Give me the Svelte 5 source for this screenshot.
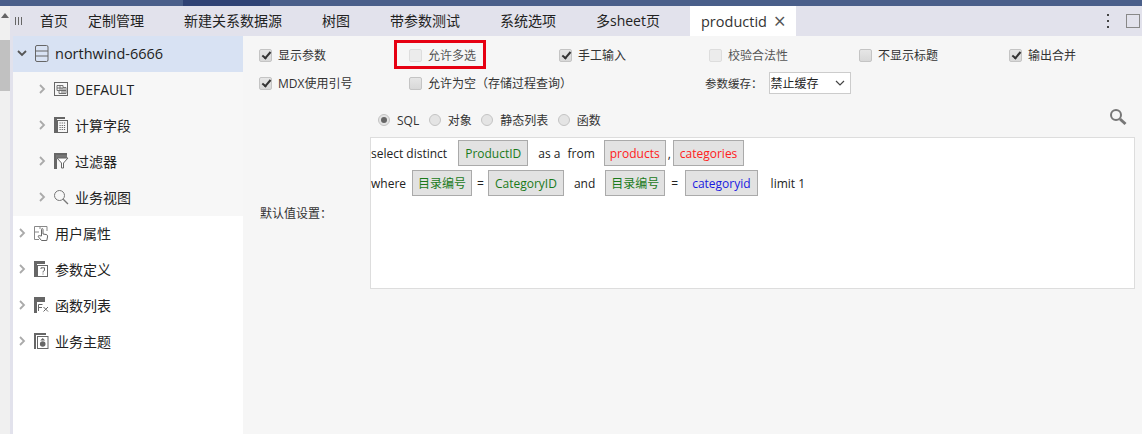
<script>
	const tabs = ['首页', '定制管理', '新建关系数据源', '树图', '带参数测试', '系统选项', '多sheet页']

	const row1 = [
		{ label: '显示参数', checked: true },
		{ label: '允许多选', disabled: true, flagged: true },
		{ label: '手工输入', checked: true },
		{ label: '校验合法性', disabled: true },
		{ label: '不显示标题' },
		{ label: '输出合并', checked: true }
	]

	const radios = [
		{ label: 'SQL', checked: true },
		{ label: '对象' },
		{ label: '静态列表' },
		{ label: '函数' }
	]

	const children = [
		{ label: 'DEFAULT', icon: 'grid' },
		{ label: '计算字段', icon: 'calc' },
		{ label: '过滤器', icon: 'filter' },
		{ label: '业务视图', icon: 'lens' }
	]

	const roots = [
		{ label: '用户属性', icon: 'hand' },
		{ label: '参数定义', icon: 'param' },
		{ label: '函数列表', icon: 'fx' },
		{ label: '业务主题', icon: 'topic' }
	]
</script>

{#snippet chevron(open)}
	<svg class="chev" width="10" height="12" viewBox="0 0 10 12">
		{#if open}
			<path d="M1 4l4 4 4-4" fill="none" stroke="#555" stroke-width="1.8" />
		{:else}
			<path d="M3 2l4 4-4 4" fill="none" stroke="#aaa" stroke-width="1.8" />
		{/if}
	</svg>
{/snippet}

{#snippet treeIcon(name)}
	<svg class="icon" width="16" height="16" viewBox="0 0 16 16" fill="none" stroke="#666" stroke-width="1">
		{#if name === 'grid'}
			<rect x="1.5" y="1.5" width="13" height="13" />
			<path d="M4 4.5h6v2h3v6H6v-3H4zM7 4.5v5M4 7h6M6 9.5h7M9 7v5.5M11 7v5.5" stroke-width="0.9" />
		{:else if name === 'calc'}
			<path d="M1 0h11v2H4v14H1z" fill="#666" stroke="none" />
			<rect x="4.5" y="3.5" width="10" height="12" />
			<path d="M6.5 6h6M6.5 8.5h6M6.5 10.5h6M6.5 12.5h6" stroke-dasharray="1.2 1" />
		{:else if name === 'filter'}
			<path d="M1 0h13v2H4v14H1z" fill="#666" stroke="none" />
			<path d="M3 2h11v4H3z" fill="#777" stroke="none" />
			<path d="M4 5h11l-4.500 5v5H8.500v-5z" fill="#fff" stroke="#666" />
		{:else if name === 'lens'}
			<circle cx="6.5" cy="6.5" r="5" stroke="#777" />
			<path d="M10.2 10.2l4.800 4.800" stroke="#777" stroke-width="1.3" />
		{:else if name === 'hand'}
			<path d="M14 6V1.500H1.500v13H6" stroke="#888" />
			<path d="M1.500 7H6M7 1.500V4" stroke="#888" />
			<path d="M8.500 11V4.500c0-1.300 1.500-1.300 1.500 0V9l3 .5c1.500.3 1.800 1 1.500 2.500l-.7 3.500H8.500L5.500 12c-.8-1 .4-2 1.300-1.200z" fill="#fff" />
		{:else if name === 'param'}
			<path d="M1 0h11v3H4v13H1z" fill="#666" stroke="none" />
			<rect x="4.5" y="4.5" width="10" height="11" />
			<path d="M8 8V6.800h3.500V9.500L10 10.500v1" />
			<path d="M10 12.500v1" />
		{:else if name === 'fx'}
			<path d="M1 0h11v5H4v11H1z" fill="#666" stroke="none" />
			<path d="M5.500 14V7.500h4M5.500 10.500h3.500M10.500 10l4.500 4.500M15 10l-4.500 4.500" />
		{:else}
			<path d="M1 0h12v2H3v14H1z" fill="#666" stroke="none" />
			<rect x="4.500" y="3.500" width="10.500" height="12" />
			<path d="M9.700 5l2.500 2.500h-5z" fill="#666" stroke="none" />
			<circle cx="9.700" cy="11" r="2.800" fill="#666" stroke="none" />
		{/if}
	</svg>
{/snippet}

<div class="page">
	<div class="topbar">
		<i class="dark-mid"></i>
	</div>

	<div class="body">
		<div class="scroll">
			<i class="arrow"></i>
			<i class="thumb"></i>
		</div>

		<div class="right">
			<div class="tabbar">
				<span class="grip"><i></i><i></i><i></i></span>
				<div class="tabs">
					{#each tabs as t}
						<span class="tab">{t}</span>
					{/each}
					<span class="tab active">productid <b>×</b></span>
				</div>
				<div class="tools">
					<span class="kebab"><i></i><i></i><i></i></span>
					<span class="square"></span>
				</div>
			</div>

			<div class="content">
				<aside class="tree">
					<div class="node selected">
						{@render chevron(true)}
						<svg class="icon" width="14" height="17" viewBox="0 0 14 17" fill="none" stroke="#666">
							<rect x="0.5" y="0.5" width="12.500" height="16" rx="1.500" />
							<path d="M0.500 6h12.500M0.500 11h12.500" />
						</svg>
						<span>northwind-6666</span>
					</div>
					<div class="sub">
						{#each children as c}
							<div class="node child">
								{@render chevron(false)}
								{@render treeIcon(c.icon)}
								<span>{c.label}</span>
							</div>
						{/each}
					</div>
					{#each roots as r}
						<div class="node">
							{@render chevron(false)}
							{@render treeIcon(r.icon)}
							<span>{r.label}</span>
						</div>
					{/each}
				</aside>

				<main class="form">
					<div class="options">
						{#each row1 as o}
							<label class="opt" class:off={o.disabled} class:flagged={o.flagged}>
								<input type="checkbox" checked={o.checked} disabled={o.disabled} />
								{o.label}
							</label>
						{/each}
						<label class="opt"><input type="checkbox" checked />MDX使用引号</label>
						<label class="opt wide"><input type="checkbox" />允许为空（存储过程查询）</label>
						<div class="cache">
							<span>参数缓存：</span>
							<select><option>禁止缓存</option></select>
						</div>
					</div>

					<div class="kinds">
						<div class="radios">
							{#each radios as r}
								<label><input type="radio" name="kind" checked={r.checked} />{r.label}</label>
							{/each}
						</div>
						<svg class="search" width="18" height="18" viewBox="0 0 18 18" fill="none" stroke="#777">
							<circle cx="7" cy="7" r="5" stroke-width="2" />
							<path d="M11 11l5.500 5" stroke-width="3" />
						</svg>
					</div>

					<div class="default">
						<span class="default-label">默认值设置：</span>
						<div class="editor">
							<div class="line">
								<span>select distinct</span>
								<span class="tok green m11">ProductID</span>
								<span class="m10">as a</span>
								<span class="m7">from</span>
								<span class="tok red narrow m9">products</span>
								<span class="comma">,</span>
								<span class="tok red">categories</span>
							</div>
							<div class="line">
								<span>where</span>
								<span class="tok green narrow m6">目录编号</span>
								<span class="eq">=</span>
								<span class="tok green">CategoryID</span>
								<span class="m10">and</span>
								<span class="tok green narrow m10">目录编号</span>
								<span class="eq2">=</span>
								<span class="tok blue">categoryid</span>
								<span class="limit">limit 1</span>
							</div>
						</div>
					</div>
				</main>
			</div>
		</div>
	</div>
</div>

<style>
	:global(body) {
		margin: 0;
		background: #f6f6f6;
	}

	.page {
		width: 1142px;
		height: 434px;
		overflow: hidden;
		font-family: 'Open Sans', 'Noto Sans CJK SC', sans-serif;
		color: #222;
		display: flex;
		flex-direction: column;
	}

	.topbar {
		height: 6px;
		background: #4a5f8a;
		display: flex;
		flex: none;
	}

	.dark-mid {
		width: 87px;
		margin-left: 183px;
		background: #2f4274;
	}

	.body {
		flex: 1;
		display: flex;
		min-height: 0;
	}

	.scroll {
		width: 10px;
		flex: none;
		background: #f0f0f0;
		display: flex;
		flex-direction: column;
		align-items: center;
	}

	.arrow {
		margin-top: 7px;
		border: 4px solid transparent;
		border-top: 0;
		border-bottom: 5px solid #666;
	}

	.thumb {
		width: 10px;
		height: 51px;
		margin-top: 22px;
		background: #c1c1c1;
	}

	.right {
		flex: 1;
		display: flex;
		flex-direction: column;
		min-width: 0;
	}

	.tabbar {
		height: 30px;
		flex: none;
		background: #e2e2ec;
		display: flex;
		align-items: center;
	}

	.grip {
		display: flex;
		gap: 2px;
		width: 7px;
		margin-left: 5px;
	}

	.grip i {
		width: 1px;
		height: 8px;
		background: #666;
	}

	.tabs {
		display: flex;
		height: 100%;
		margin-left: -2px;
	}

	.tab {
		padding: 0 20px;
		font-size: 14px;
		line-height: 30px;
		white-space: nowrap;
		color: #222;
	}

	.tab:first-child {
		padding-right: 0;
	}

	.tab.active {
		background: #fff;
		padding: 0 10px 0 11px;
		margin-left: 10px;
		color: #333;
		font-size: 14.5px;
	}

	.tab b {
		font-weight: 400;
		font-size: 21px;
		color: #555;
		line-height: 30px;
		vertical-align: -2px;
		margin-left: 3px;
	}

	.tools {
		margin-left: auto;
		display: flex;
		align-items: center;
		gap: 17px;
		padding-right: 2px;
	}

	.kebab {
		display: flex;
		flex-direction: column;
		gap: 4px;
	}

	.kebab i {
		width: 2px;
		height: 2px;
		background: #444;
	}

	.square {
		width: 12px;
		height: 12px;
		border: 1px solid #888;
	}

	.content {
		flex: 1;
		display: flex;
		min-height: 0;
		border-left: 3px solid #e2e2ec;
	}

	.tree {
		width: 230px;
		flex: none;
		background: #fff;
		font-size: 14px;
	}

	.node {
		height: 36px;
		box-sizing: border-box;
		padding: 0 0 2px 4px;
		display: flex;
		align-items: center;
		white-space: nowrap;
	}

	.node.selected {
		background: #d8e2f3;
		font-size: 14.5px;
	}

	.node.selected .icon {
		margin: 0 6px 0 8px;
	}

	.sub {
		background: #f7f7f7;
	}

	.child {
		padding-left: 24px;
	}

	.chev {
		flex: none;
	}

	.icon {
		flex: none;
		margin: 0 6px;
	}

	.form {
		flex: 1;
		min-width: 0;
		padding: 0 7px 0 16px;
		font-size: 12px;
		color: #333;
	}

	.options {
		display: grid;
		grid-template-columns: repeat(6, 150px);
		grid-auto-rows: 28px;
		padding-top: 5px;
		align-items: center;
	}

	.opt {
		display: flex;
		align-items: center;
		gap: 6px;
		white-space: nowrap;
		position: relative;
	}

	.opt.wide {
		grid-column: span 2;
	}

	.opt.off {
		color: #555;
	}

	/* red annotation drawn over the screenshot */
	.opt.flagged::after {
		content: '';
		position: absolute;
		left: -15px;
		top: -6px;
		width: 86px;
		height: 23px;
		border: 3px solid #e60012;
	}

	input[type='checkbox'] {
		appearance: none;
		margin: 0;
		width: 13px;
		height: 13px;
		flex: none;
		border: 1px solid #c4c4c4;
		border-radius: 2px;
		background: linear-gradient(#e6e6e6, #d8d8d8);
		position: relative;
	}

	input[type='checkbox']:checked::before {
		content: '';
		position: absolute;
		left: 3.5px;
		top: 0.5px;
		width: 3px;
		height: 7px;
		border: solid #333;
		border-width: 0 2px 2px 0;
		transform: rotate(40deg);
	}

	input[type='checkbox']:disabled {
		background: #ececec;
		border-color: #ddd;
	}

	.cache {
		grid-column: span 2;
		display: flex;
		align-items: center;
		gap: 6px;
		margin-left: -4px;
		font-size: 11.5px;
	}

	select {
		appearance: none;
		width: 82px;
		height: 22px;
		padding: 0 0 0 1px;
		font: 12px 'Open Sans', 'Noto Sans CJK SC', sans-serif;
		color: #222;
		border: 1px solid #ccc;
		background:
			url("data:image/svg+xml,%3Csvg xmlns='http://www.w3.org/2000/svg' width='10' height='6'%3E%3Cpath d='M1 1l4 4 4-4' fill='none' stroke='%23444' stroke-width='1.2'/%3E%3C/svg%3E")
				no-repeat right 5px center,
			#fff;
		border-radius: 0;
	}

	.kinds {
		height: 40px;
		display: flex;
		align-items: center;
		justify-content: space-between;
		padding-left: 119px;
	}

	.search {
		margin: -1px 8px 0 0;
	}

	.radios {
		display: flex;
		gap: 9.5px;
		margin-top: 6px;
	}

	.radios label {
		display: flex;
		align-items: center;
		gap: 7px;
	}

	input[type='radio'] {
		appearance: none;
		margin: 0;
		width: 12px;
		height: 12px;
		border: 1px solid #c4c4c4;
		border-radius: 50%;
		background: #e4e4e4;
		position: relative;
	}

	input[type='radio']:checked::before {
		content: '';
		position: absolute;
		inset: 2px;
		border-radius: 50%;
		background: #666;
	}

	.default {
		display: flex;
		align-items: center;
	}

	.default-label {
		width: 111px;
		flex: none;
		padding-left: 1px;
		box-sizing: border-box;
	}

	.editor {
		flex: 1;
		height: 152px;
		box-sizing: border-box;
		background: #fff;
		border: 1px solid #ddd;
		padding-top: 2px;
		color: #222;
	}

	.line {
		height: 26px;
		margin-bottom: 4px;
		display: flex;
		align-items: center;
		white-space: nowrap;
	}

	.line > span:not(.tok) {
		padding-top: 1px;
	}

	.tok {
		height: 24px;
		line-height: 25px;
		padding: 0 6px;
		background: #e2e2e2;
		border: 1px solid #aaa;
	}

	.tok.narrow {
		padding: 0 5px;
	}

	.green { color: #1a7a1a; }
	.red { color: #ff2020; }
	.blue { color: #1a1ae0; }

	.m6 { margin-left: 6px; }
	.m7 { margin-left: 7px; }
	.m9 { margin-left: 9px; }
	.m10 { margin-left: 10px; }
	.m11 { margin-left: 11px; }
	.comma { margin: 0 2px; }
	.eq { margin: 0 4px 0 5px; }
	.eq2 { margin: 0 7px 0 6px; }
	.limit { margin-left: 13px; }
</style>
